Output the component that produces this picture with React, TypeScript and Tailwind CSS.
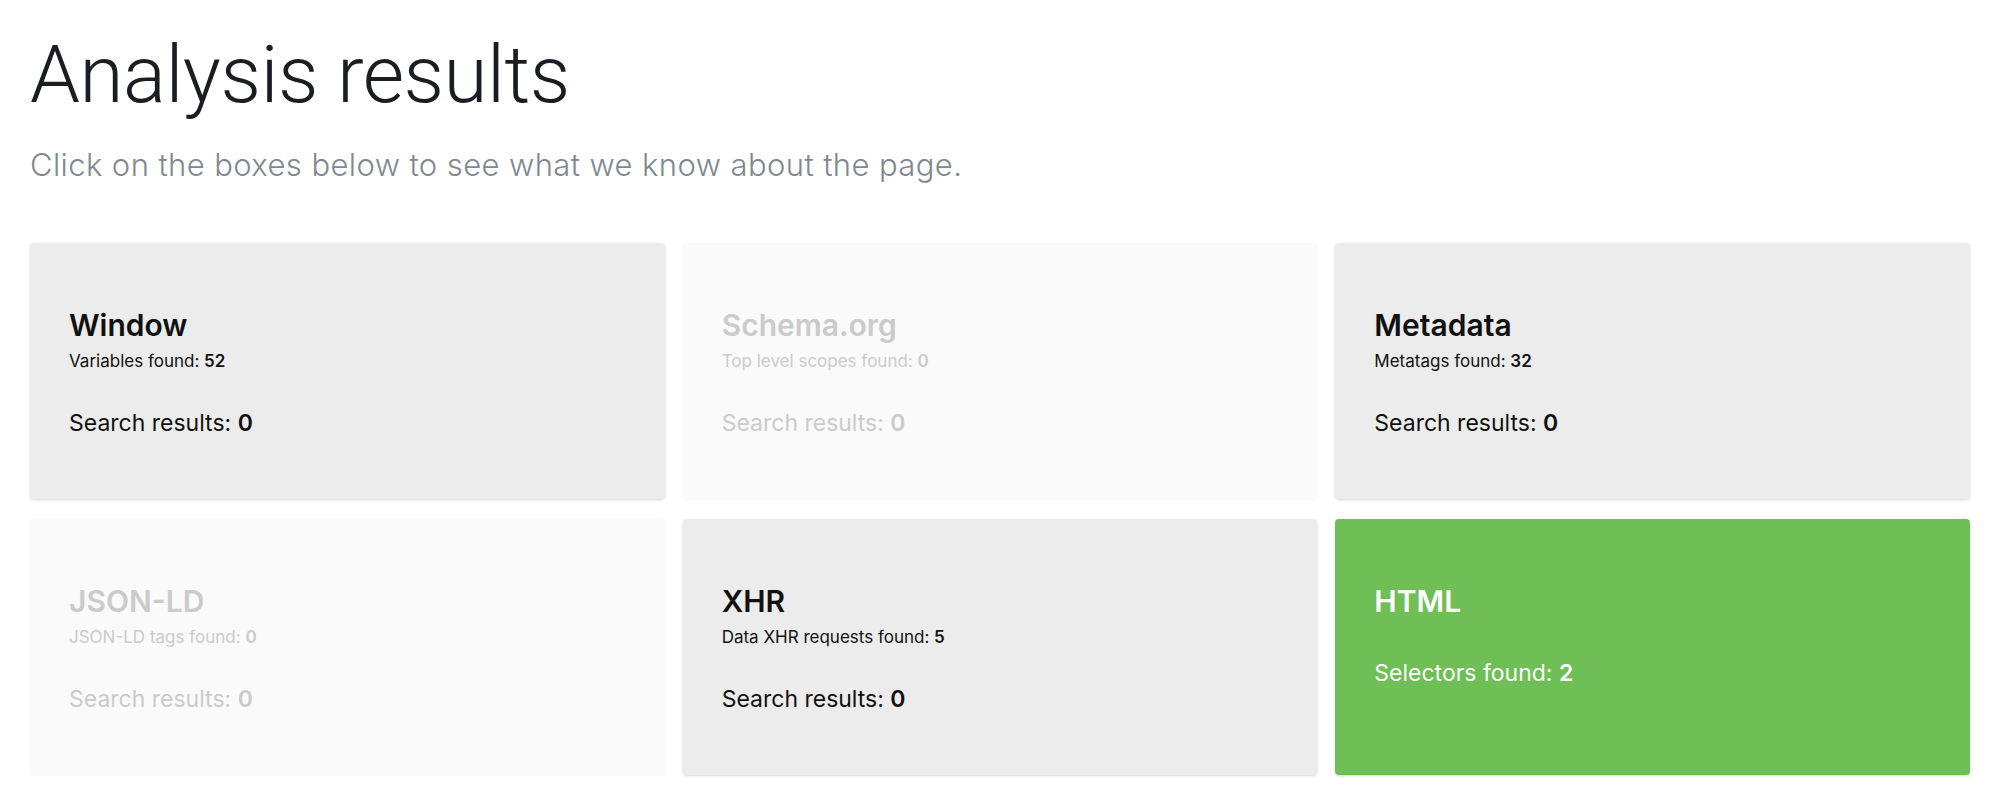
const BOXES = [
  { title: 'Window', sub: 'Variables found:', subCount: '52', search: '0', state: 'on' },
  { title: 'Schema.org', sub: 'Top level scopes found:', subCount: '0', search: '0', state: 'off' },
  { title: 'Metadata', sub: 'Metatags found:', subCount: '32', search: '0', state: 'on' },
  { title: 'JSON-LD', sub: 'JSON-LD tags found:', subCount: '0', search: '0', state: 'off' },
  { title: 'XHR', sub: 'Data XHR requests found:', subCount: '5', search: '0', state: 'on' },
];

function Box({ box }: { box: (typeof BOXES)[number] }) {
  const off = box.state === 'off';
  return (
    <div
      className={
        off
          ? 'h-[256px] rounded-[4px] bg-[#fafafa] pl-[39px] pt-[64px] text-[#cbcbcb] shadow-[0_1px_3px_rgba(0,0,0,0.04)]'
          : 'h-[256px] rounded-[4px] bg-[#ececec] pl-[39px] pt-[64px] text-[#111111] shadow-[0_1px_3px_rgba(0,0,0,0.16)]'
      }
    >
      <h3 className="text-[30px] leading-[36px] font-semibold">{box.title}</h3>
      <p className="mt-[8px] text-[17px] leading-[20px]">
        {box.sub} <span className="font-semibold">{box.subCount}</span>
      </p>
      <p className="mt-[38px] text-[23px] leading-[28px]">
        Search results: <span className="font-semibold">{box.search}</span>
      </p>
    </div>
  );
}

export default function App() {
  return (
    <div className="min-h-screen bg-white px-[30px] pt-[35px] font-['Inter',sans-serif]">
      <h1 className="font-['Roboto',sans-serif] text-[80px] leading-[80px] font-light tracking-[-0.5px] text-[#1a1d21]">
        Analysis results
      </h1>
      <p className="mt-[32px] text-[31px] leading-[36px] font-light tracking-[0.4px] text-[#7f8891]">
        Click on the boxes below to see what we know about the page.
      </p>

      <div className="mt-[60px] grid grid-cols-3 gap-x-[18px] gap-y-[20px]">
        {BOXES.map((box) => (
          <Box key={box.title} box={box} />
        ))}
        <div className="h-[256px] rounded-[4px] bg-[#6ebf55] pl-[39px] pt-[64px] text-white shadow-[0_1px_3px_rgba(0,0,0,0.16)]">
          <h3 className="text-[30px] leading-[36px] font-semibold">HTML</h3>
          <p className="mt-[40px] text-[23px] leading-[28px]">
            Selectors found: <span className="font-semibold">2</span>
          </p>
        </div>
      </div>
    </div>
  );
}
